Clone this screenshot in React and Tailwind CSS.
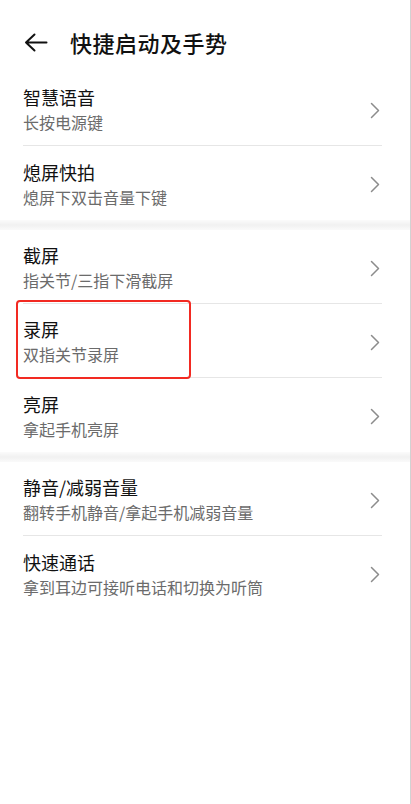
import { useState } from 'react';

const GROUPS = [
  [
    { title: '智慧语音', desc: '长按电源键' },
    { title: '熄屏快拍', desc: '熄屏下双击音量下键' },
  ],
  [
    { title: '截屏', desc: '指关节/三指下滑截屏' },
    { title: '录屏', desc: '双指关节录屏', marked: true },
    { title: '亮屏', desc: '拿起手机亮屏' },
  ],
  [
    { title: '静音/减弱音量', desc: '翻转手机静音/拿起手机减弱音量' },
    { title: '快速通话', desc: '拿到耳边可接听电话和切换为听筒' },
  ],
];

function Chevron() {
  return (
    <svg width="10" height="17" viewBox="0 0 10 17" fill="none" className="mr-[2px] shrink-0">
      <path d="M1.5 1.5L8.5 8.5L1.5 15.5" stroke="#8c8c8c" strokeWidth="1.5" strokeLinecap="round" strokeLinejoin="round" />
    </svg>
  );
}

function Row({ item, last }) {
  return (
    <div className="relative pl-[23px] pr-[28px]">
      {item.marked && (
        <div className="absolute left-[16px] -top-[4px] w-[175px] h-[79px] border-2 border-[#f22a22] rounded-[4px] pointer-events-none" />
      )}
      <div className={`h-[74px] flex items-center justify-between pt-[3px] ${last ? '' : 'border-b border-[#e6e6e6]'}`}>
        <div className="flex flex-col">
          <span className="text-[18px] leading-[25px] text-[#111]">{item.title}</span>
          <span className="text-[16px] leading-[25px] text-[#6b6b6b]">{item.desc}</span>
        </div>
        <Chevron />
      </div>
    </div>
  );
}

export default function App() {
  const [groups] = useState(GROUPS);

  return (
    <div
      className="w-[411px] h-[804px] bg-white border-r border-[#d2d2d2] overflow-hidden"
      style={{ fontFamily: '"Noto Sans CJK SC", "Noto Sans", sans-serif' }}
    >
      <div className="h-[72px] flex items-center pl-[24px] pt-[12px]">
        <svg width="24" height="19" viewBox="0 0 24 19" fill="none">
          <path d="M22.5 9.5H2M10.5 1.5L2 9.5L10.5 17.5" stroke="#111" strokeWidth="2" strokeLinecap="round" strokeLinejoin="round" />
        </svg>
        <h1 className="ml-[22px] text-[22px] font-medium text-[#111] tracking-[0.5px]">快捷启动及手势</h1>
      </div>

      {groups.map((group, gi) => (
        <div key={gi}>
          {gi > 0 && (
            <div className="h-[10px] bg-gradient-to-b from-[#fbfbfb] via-[#f1f1f1] to-[#fafafa]" />
          )}
          {group.map((item, i) => (
            <Row key={item.title} item={item} last={i === group.length - 1} />
          ))}
        </div>
      ))}
    </div>
  );
}
